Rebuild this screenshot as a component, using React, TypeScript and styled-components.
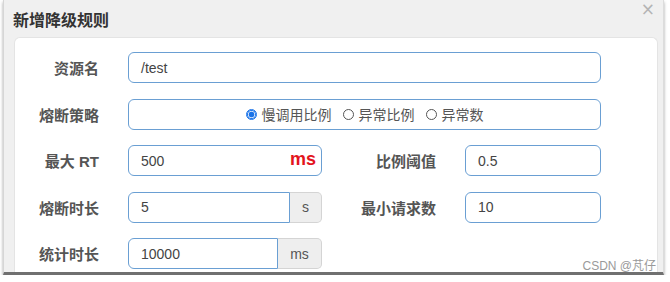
import React from 'react';
import styled, { createGlobalStyle } from 'styled-components';

const GlobalStyle = createGlobalStyle`
  html, body {
    margin: 0;
    padding: 0;
    background: #ffffff;
    font-family: "Liberation Sans", "Noto Sans CJK SC", sans-serif;
  }
`;

const Modal = styled.div`
  position: relative;
  width: 661px;
  height: 275px;
  margin-left: 3px;
  background: #f0f0f0;
  border-left: 1px solid #d6d6d6;
  border-right: 1px solid #dcdcdc;
  border-bottom: 3px solid #707070;
  box-shadow: 0 2px 3px rgba(0, 0, 0, 0.35);
  box-sizing: border-box;
  display: flex;
  flex-direction: column;
`;

const Header = styled.div`
  height: 37px;
  display: flex;
  align-items: center;
  padding-left: 9px;
  flex-shrink: 0;
`;

const Title = styled.h4`
  margin: 0;
  font-family: "Noto Sans CJK SC", sans-serif;
  font-size: 16px;
  font-weight: 700;
  color: #333;
`;

const Close = styled.span`
  position: absolute;
  right: 8px;
  top: -1px;
  font-family: "DejaVu Sans", sans-serif;
  font-size: 17px;
  color: #b4b4b4;
`;

const Panel = styled.div`
  flex: 1;
  margin: 0 5px 0 10px;
  background: #fff;
  border: 1px solid #e4e4e4;
  border-bottom: none;
  border-radius: 6px 6px 0 0;
  padding: 14px 0 0 0;
  overflow: hidden;
`;

const Form = styled.div`
  display: grid;
  grid-template-columns: 113px 194px 143px 136px;
  grid-auto-rows: 31px;
  row-gap: 15.5px;
  align-items: center;
`;

const Label = styled.label<{ $pad?: number }>`
  text-align: right;
  padding-right: ${(p) => p.$pad ?? 29}px;
  font-family: "Liberation Sans", "Noto Sans CJK SC", sans-serif;
  font-size: 15px;
  font-weight: 700;
  color: #555;
  white-space: nowrap;
`;

const Field = styled.div<{ $span?: number }>`
  position: relative;
  grid-column: span ${(p) => p.$span ?? 1};
  display: flex;
  height: 31px;
`;

const Input = styled.div<{ $joined?: boolean }>`
  flex: 1;
  display: flex;
  align-items: center;
  box-sizing: border-box;
  height: 31px;
  padding-left: 12px;
  border: 1px solid #6a9fd3;
  border-radius: ${(p) => (p.$joined ? '6px 0 0 6px' : '6px')};
  font-size: 14px;
  color: #444;
`;

const Addon = styled.div<{ $w: number }>`
  width: ${(p) => p.$w}px;
  box-sizing: border-box;
  display: flex;
  align-items: center;
  justify-content: center;
  background: #eeeeee;
  border: 1px solid #d4d4d4;
  border-left: none;
  border-radius: 0 5px 5px 0;
  font-size: 14px;
  color: #555;
`;

const RedUnit = styled.span`
  position: absolute;
  right: 6px;
  top: 4px;
  font-size: 18px;
  font-weight: 700;
  color: #e3141c;
`;

const RadioBox = styled.div`
  flex: 1;
  display: flex;
  align-items: center;
  justify-content: center;
  gap: 11px;
  box-sizing: border-box;
  border: 1px solid #6a9fd3;
  border-radius: 6px;
`;

const Option = styled.span`
  display: flex;
  align-items: center;
  gap: 5px;
  font-family: "Noto Sans CJK SC", sans-serif;
  font-size: 14px;
  color: #555;
`;

const Dot = styled.span<{ $on?: boolean }>`
  width: 11px;
  height: 11px;
  box-sizing: border-box;
  border-radius: 50%;
  border: 1px solid ${(p) => (p.$on ? '#1a73e8' : '#555')};
  background: ${(p) => (p.$on ? 'radial-gradient(circle, #1a73e8 0 2.6px, #fff 3.2px)' : '#fff')};
  box-shadow: ${(p) => (p.$on ? 'inset 0 0 0 1px #1a73e8' : 'none')};
`;

const Watermark = styled.span`
  position: absolute;
  right: 7px;
  bottom: -1px;
  font-family: "Liberation Sans", "Noto Sans CJK SC", sans-serif;
  font-size: 12px;
  color: #9a9a9a;
`;

const options = ['慢调用比例', '异常比例', '异常数'];

export default function App() {
  return (
    <>
      <GlobalStyle />
      <Modal>
        <Header>
          <Title>新增降级规则</Title>
        </Header>
        <Close>×</Close>
        <Panel>
          <Form>
            <Label>资源名</Label>
            <Field $span={3}>
              <Input>/test</Input>
            </Field>

            <Label>熔断策略</Label>
            <Field $span={3}>
              <RadioBox>
                {options.map((o, i) => (
                  <Option key={o}>
                    <Dot $on={i === 0} />
                    {o}
                  </Option>
                ))}
              </RadioBox>
            </Field>

            <Label>最大 RT</Label>
            <Field>
              <Input>500</Input>
              <RedUnit>ms</RedUnit>
            </Field>
            <Label>比例阈值</Label>
            <Field>
              <Input>0.5</Input>
            </Field>

            <Label>熔断时长</Label>
            <Field>
              <Input $joined>5</Input>
              <Addon $w={32}>s</Addon>
            </Field>
            <Label>最小请求数</Label>
            <Field>
              <Input>10</Input>
            </Field>

            <Label>统计时长</Label>
            <Field>
              <Input $joined>10000</Input>
              <Addon $w={44}>ms</Addon>
            </Field>
          </Form>
        </Panel>
        <Watermark>CSDN @芃仔</Watermark>
      </Modal>
    </>
  );
}
